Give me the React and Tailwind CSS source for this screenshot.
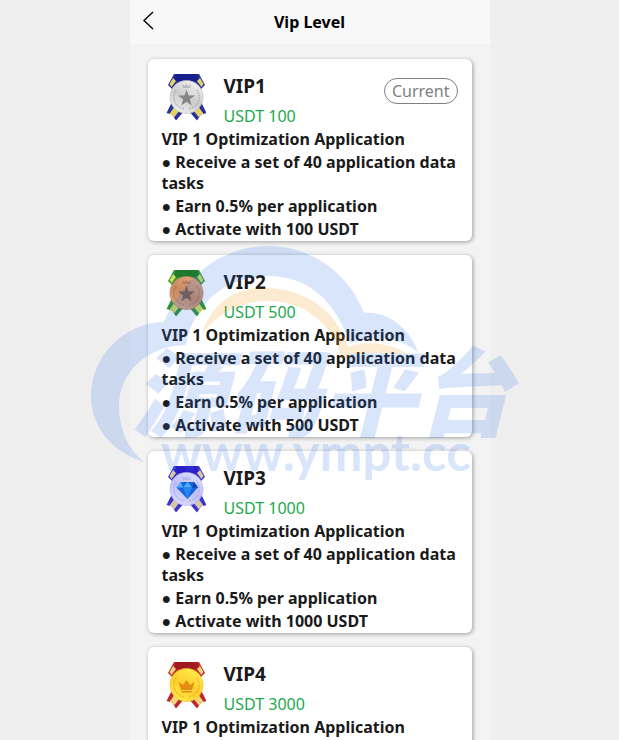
import React from 'react';

const levels = [
  {
    id: 1,
    name: 'VIP1',
    price: 100,
    current: true,
    emblem: 'star',
    medal: { ribbon: '#26309c', dark: '#171f8c', stripe: '#e6d264', light: '#efefef', face: '#cdcdcd', edge: '#bcbcbc', mark: '#858585' },
  },
  {
    id: 2,
    name: 'VIP2',
    price: 500,
    emblem: 'star',
    medal: { ribbon: '#2f8f3c', dark: '#1e7a2c', stripe: '#d3dc58', light: '#dfa57c', face: '#c98a60', edge: '#c07a50', mark: '#7d5a44' },
  },
  {
    id: 3,
    name: 'VIP3',
    price: 1000,
    emblem: 'diamond',
    medal: { ribbon: '#3a34d0', dark: '#2a1fc8', stripe: '#d9c8a4', light: '#dcdcff', face: '#bfbff5', edge: '#b0b0f0', mark: '#9494dd' },
  },
  {
    id: 4,
    name: 'VIP4',
    price: 3000,
    emblem: 'crown',
    medal: { ribbon: '#c0262c', dark: '#a01a20', stripe: '#f3d67a', light: '#ffe94a', face: '#fbd02c', edge: '#f2bd24', mark: '#e58a12' },
  },
];

const Medal = ({ id, emblem, colors }) => (
  <svg viewBox="10 7 40 48" className="h-12 w-10 shrink-0" aria-hidden="true">
    <defs>
      <linearGradient id={`face-${id}`} x1="0.8" y1="0.1" x2="0.3" y2="1">
        <stop offset="0" stopColor={colors.light} />
        <stop offset="0.5" stopColor={colors.face} />
        <stop offset="1" stopColor={colors.light} />
      </linearGradient>
    </defs>
    {/* Ribbon tails */}
    <path d="M16 36 L10.5 47 L16 48.5 L20 54.5 L29 44 Z" fill={colors.ribbon} />
    <path d="M45 36 L50.5 47 L45 48.5 L41 54.5 L32 44 Z" fill={colors.ribbon} />
    <path d="M19 40 L13.5 47.8 L16 48.5 L18 51.5 L24 44 Z" fill={colors.stripe} />
    <path d="M42 40 L47.5 47.8 L45 48.5 L43 51.5 L37 44 Z" fill={colors.stripe} />
    {/* Ribbon top */}
    <path d="M18 8 H43 L49 19 L44 24 H17 L12 19 Z" fill={colors.ribbon} />
    <path d="M20 8 H41 L43 15 H18 Z" fill={colors.dark} />
    <path d="M17 12 L20 15 L15.5 21 L13.5 18 Z" fill={colors.stripe} />
    <path d="M44 12 L41 15 L45.5 21 L47.5 18 Z" fill={colors.stripe} />
    <circle cx="30.5" cy="31" r="16.6" fill={`url(#face-${id})`} stroke={colors.edge} strokeWidth="0.6" />
    {/* Laurel */}
    <path d="M20 24 C15 31 18 40 28 43 M41 24 C46 31 43 40 33 43" fill="none" stroke={colors.mark} strokeWidth="1.8" strokeDasharray="1.6 0.9" opacity="0.4" />
    {emblem !== 'crown' && (
      <path d="M27 22 L26 18 L29 20 L30.5 17.5 L32 20 L35 18 L34 22 Z" fill={colors.mark} opacity="0.4" />
    )}
    {emblem === 'star' && (
      <path d="M30.5 23.5 L32.5 29.6 H39 L33.8 33.3 L35.7 39.5 L30.5 35.8 L25.3 39.5 L27.2 33.3 L22 29.6 H28.5 Z" fill={colors.mark} />
    )}
    {emblem === 'diamond' && (
      <>
        <path d="M25 24 H38 L42 29.5 L31.5 41 L20.5 29.5 Z" fill="#1a63dc" />
        <path d="M25 24 L27 29.5 H20.5 Z M31.5 24 L36 29.5 H27 Z" fill="#52b0fa" />
        <path d="M27 29.5 H36 L31.5 41 Z" fill="#2585f0" />
        <path d="M38 24 L42 29.5 H36 Z" fill="#0f3fae" />
      </>
    )}
    {emblem === 'crown' && (
      <path d="M25 36 L22.5 28 L27 31 L30.5 26 L34 31 L38.5 28 L36 36 Z M25.5 37 H35.5 V38.5 H25.5 Z" fill={colors.mark} />
    )}
  </svg>
);

const Watermark = () => (
  <svg
    viewBox="0 0 440 260"
    className="pointer-events-none absolute top-60 left-1/2 w-[440px] -translate-x-1/2 opacity-[0.18]"
    aria-hidden="true"
  >
    {/* Cloud */}
    <path
      d="M54 222 C22 212 1 187 1 156 C1 116 34 83 74 82 C93 37 132 6 178 6 C222 6 259 34 274 73 C297 71 319 87 328 112 C311 98 286 95 260 103 C245 62 220 36 178 36 C136 36 103 64 96 105 C55 106 29 134 29 166 C29 190 38 209 54 222 Z"
      fill="#2c74ee"
    />
    {/* Sun arc */}
    <path
      d="M112 94 C122 63 144 48 174 48 C215 48 246 70 258 107 C278 100 301 103 319 115 C298 112 272 113 252 119 C242 82 213 61 178 61 C150 61 128 73 112 94 Z"
      fill="#f99505"
    />
    <text x="42" y="189" fontSize="95" className="font-['Noto_Sans_CJK_SC',sans-serif] font-black italic" fill="#2c74ee">
      源码平台
    </text>
    <text x="71" y="231" fontSize="51" className="font-['Lato',sans-serif] font-bold" fill="#2c74ee">
      www.ympt.cc
    </text>
  </svg>
);

const LevelCard = ({ level }) => (
  <li className="rounded-md bg-white pt-3 pr-2 pb-px pl-3.5 shadow-[1px_1px_4px_rgba(0,0,0,0.35)]">
    <div className="flex items-start pr-1.5">
      <div className="pl-1 pt-0.5">
        <Medal id={level.id} emblem={level.emblem} colors={level.medal} />
      </div>
      <div className="ml-[18px] flex-1">
        <h2 className="text-[19px] leading-[30px] font-bold">{level.name}</h2>
        <p className="pt-0.5 text-[16px] leading-[26px] text-[#22a94f]">USDT {level.price}</p>
      </div>
      {level.current && (
        <button type="button" className="mt-[7px] h-[26px] rounded-full border border-[#808080] px-[7px] text-[16px] leading-[22px] text-[#808080]">
          Current
        </button>
      )}
    </div>
    <div className="flex flex-col gap-0.5 text-[16px] leading-[21px] font-bold">
      <p>VIP 1 Optimization Application</p>
      <p>● Receive a set of 40 application data tasks</p>
      <p>● Earn 0.5% per application</p>
      <p>● Activate with {level.price} USDT</p>
    </div>
  </li>
);

const App = () => {
  return (
    <div className="relative h-screen overflow-hidden bg-[#efefef] font-['Noto_Sans',sans-serif] text-[#1a1a1a]">
      <div className="mx-auto flex h-full max-w-[360px] flex-col bg-[#f3f3f3]">
        <header className="grid h-11 shrink-0 grid-cols-[44px_1fr_44px] items-center bg-[#f8f8f8]">
          <button type="button" aria-label="Back" className="flex h-11 items-center pb-1 pl-3">
            <svg viewBox="0 0 14 20" className="h-5 w-3.5" fill="none" stroke="#000" strokeWidth="1.4" aria-hidden="true">
              <path d="M11 2 L2 10.5 L11 19" />
            </svg>
          </button>
          <h1 className="text-center text-[16px] font-bold text-black">Vip Level</h1>
        </header>

        <main className="flex-1 overflow-y-auto [scrollbar-width:none]">
          <ul className="flex flex-col gap-3.5 px-[18px] py-[15px]">
            {levels.map((level) => (
              <LevelCard key={level.id} level={level} />
            ))}
          </ul>
        </main>
      </div>
      <Watermark />
    </div>
  );
};

export default App;
